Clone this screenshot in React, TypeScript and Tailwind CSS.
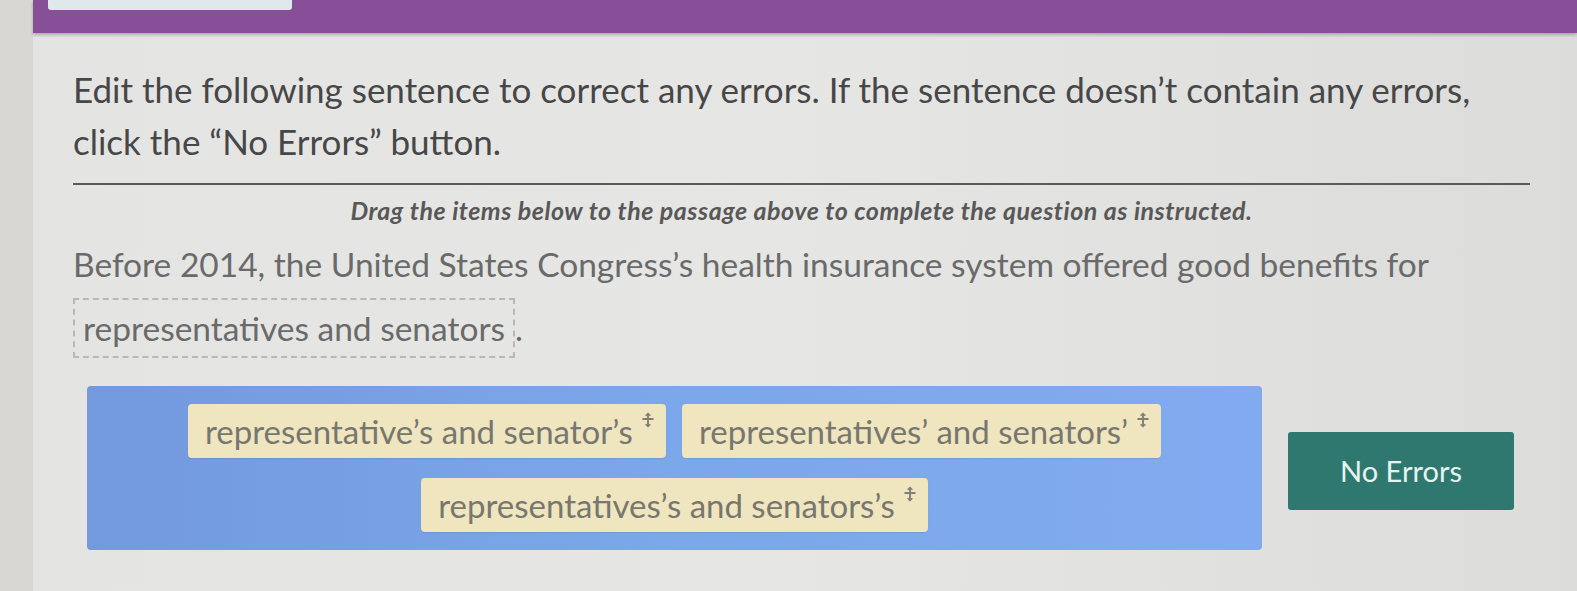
import React from 'react';

const font = { fontFamily: 'Lato, "Open Sans", "Liberation Sans", sans-serif' };

function DragMark() {
  return (
    <svg width="14" height="16" viewBox="0 0 14 16" className="ml-[8px] mt-[1px] shrink-0" fill="none">
      <path d="M7 1.5v13M1.5 7h11" stroke="#7f7f76" strokeWidth="1.9" />
      <path d="M4.6 3.8L7 1.4l2.4 2.4M4.6 12.2L7 14.6l2.4-2.4" stroke="#7f7f76" strokeWidth="1.4" />
    </svg>
  );
}

function Chip({ text }: { text: string }) {
  return (
    <div className="flex h-[54px] items-start rounded-[4px] bg-[#efe5bf] pl-[17px] pr-[11px] pt-[7px] shadow-[0_1px_1px_rgba(0,0,0,0.08)]">
      <span className="text-[33px] leading-[40px] text-[#77776f]">{text}</span>
      <DragMark />
    </div>
  );
}

export default function App() {
  return (
    <div
      className="flex h-[591px] w-[1577px] overflow-hidden bg-gradient-to-r from-[#e4e4e3] via-[#e6e6e5] to-[#dcdcdb]"
      style={font}
    >
      <div className="w-[33px] shrink-0 bg-[#d9d7d3]" />
      <div className="flex flex-1 flex-col">
        {/* top bar */}
        <div className="h-[33px] shrink-0 bg-[#874f97] shadow-[0_2px_3px_rgba(0,0,0,0.25)]">
          <div className="ml-[15px] h-[10px] w-[244px] rounded-b-[3px] bg-[#dfe8ea]" />
        </div>

        <div className="flex flex-col pl-[40px] pr-[47px]">
          <h1 className="mt-[30px] whitespace-nowrap text-[35px] leading-[52px] font-normal text-[#474747]">
            Edit the following sentence to correct any errors. If the sentence doesn’t contain any errors,
            <br />
            click the “No Errors” button.
          </h1>

          <div className="mt-[16px] h-[2px] bg-[#5a5a5a]" />

          <p className="mt-[10px] text-center text-[25px] leading-[30px] tracking-[0.5px] font-bold italic text-[#585858]">
            Drag the items below to the passage above to complete the question as instructed.
          </p>

          <div className="mt-[7px] whitespace-nowrap text-[33.5px] leading-[64px] text-[#6a6a6a]">
            Before 2014, the United States Congress’s health insurance system offered good benefits for
            <br />
            <span className="inline-block border-2 border-dashed border-[#b8b8b8] px-[8px] leading-[56px]">
              representatives and senators
            </span>
            .
          </div>

          <div className="mt-[26px] flex items-center">
            <div className="ml-[14px] flex h-[164px] w-[1175px] shrink-0 flex-col items-center justify-center gap-[20px] rounded-[4px] bg-gradient-to-r from-[#7399de] via-[#7ba8ea] to-[#82aaf0]">
              <div className="flex gap-[16px]">
                <Chip text="representative’s and senator’s" />
                <Chip text="representatives’ and senators’" />
              </div>
              <div className="flex gap-[16px]">
                <Chip text="representatives’s and senators’s" />
              </div>
            </div>
            <button className="ml-[26px] mt-[6px] flex h-[78px] w-[226px] shrink-0 items-center justify-center rounded-[3px] bg-[#2f7870] text-[29px] text-[#e6f4f1]">
              No Errors
            </button>
          </div>
        </div>
      </div>
    </div>
  );
}
